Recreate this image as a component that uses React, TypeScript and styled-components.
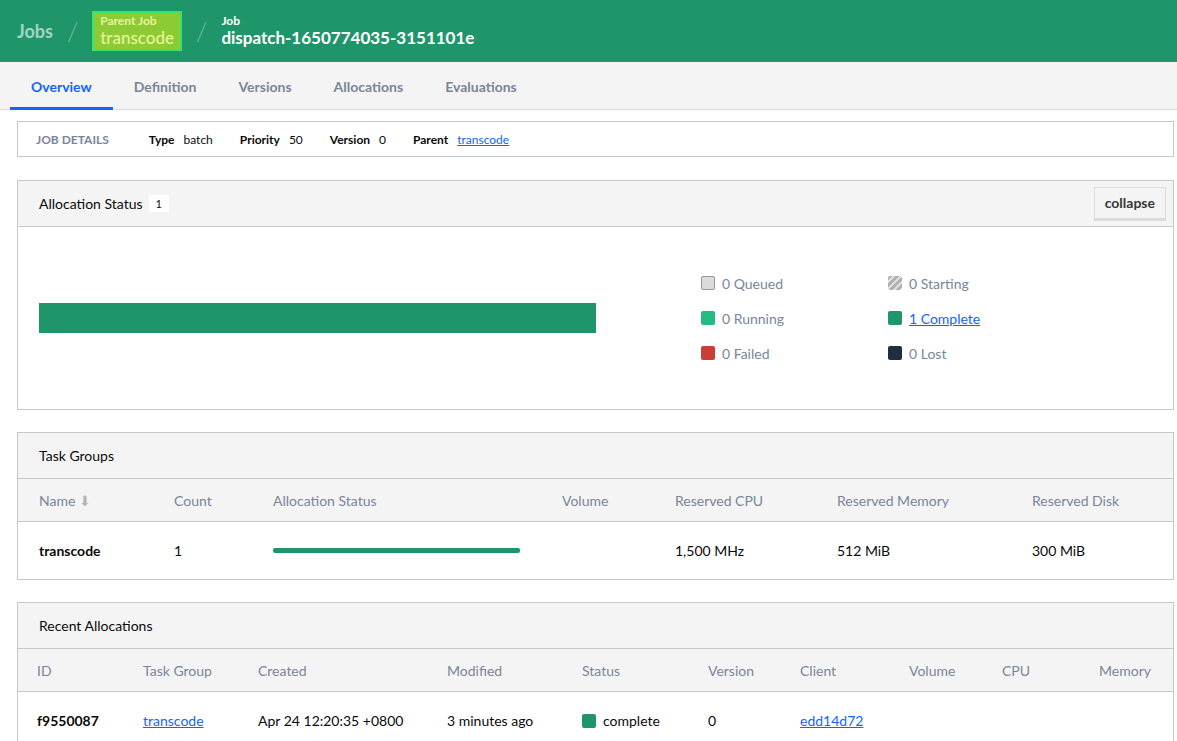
import React from "react";
import styled, { createGlobalStyle } from "styled-components";

const Global = createGlobalStyle`
  body { margin: 0; font-family: Lato, "Open Sans", sans-serif; font-size: 14px; color: #0a0a0a; background: #fff; }
  * { box-sizing: border-box; }
`;

const Header = styled.header`
  height: 62px; background: #1f966a; display: flex; align-items: center; padding: 0 17px; gap: 14px; color: #fff;
`;
const Crumb = styled.div<{ $dim?: boolean }>`
  font-size: 18px; font-weight: 700; color: ${p => (p.$dim ? "rgba(255,255,255,0.6)" : "#fff")};
`;
const Slash = styled.span`font-size: 26px; color: rgba(255,255,255,0.35); font-weight: 300;`;
const Hl = styled.div`
  background: #8dcb34; border: 2px solid #3ce36a; padding: 1px 6px 2px; color: #e8f59a; line-height: 1.1;
`;
const Small = styled.div`font-size: 12px; font-weight: 700;`;
const Big = styled.div`font-size: 17px; font-weight: 700;`;
const Stack = styled.div`display: flex; flex-direction: column; line-height: 1.15;`;

const Tabs = styled.nav`
  height: 48px; background: #f4f4f4; border-bottom: 1px solid #dbdbdb; display: flex; padding-left: 10px;
`;
const Tab = styled.div<{ $active?: boolean }>`
  padding: 0 21px; display: flex; align-items: center; font-weight: 700; font-size: 14px;
  color: ${p => (p.$active ? "#1563ff" : "#7a8599")};
  border-bottom: 3px solid ${p => (p.$active ? "#1563ff" : "transparent")};
  margin-bottom: -1px; padding-top: 3px;
`;

const Main = styled.main`padding: 11px 3px 0 17px; display: flex; flex-direction: column; gap: 22px;`;

const Details = styled.div`
  border: 1px solid #c4c8d0; height: 36px; display: flex; align-items: center; padding-left: 18px; font-size: 12px; gap: 0; margin-bottom: 1px;
`;
const DLabel = styled.span`color: #7a8599; font-weight: 700; margin-right: 40px;`;
const DKey = styled.span`font-weight: 700; margin-right: 9px;`;
const DVal = styled.span`margin-right: 27px;`;
const Link = styled.a`color: #1563ff; text-decoration: underline;`;

const Card = styled.section`border: 1px solid #c4c8d0;`;
const CardHead = styled.div`
  height: 46px; background: #f4f4f4; border-bottom: 1px solid #c4c8d0; display: flex; align-items: center; padding: 0 7px 0 21px; font-size: 14px;
`;
const Badge = styled.span`background: #fff; font-size: 11px; padding: 2px 7px; margin-left: 6px;`;
const Button = styled.button`
  margin-left: auto; font-family: inherit; font-weight: 700; font-size: 14px; background: #f4f4f4; border: 1px solid #dbdbdb;
  border-bottom: 3px solid #dbdbdb; padding: 5px 10px; color: #363636; height: 34px;
`;
const AllocBody = styled.div`height: 182px; display: grid; grid-template-columns: 557px 1fr; align-items: center; padding-left: 21px; gap: 105px;`;
const Bar = styled.div`height: 30px; background: #1f966a;`;
const Legend = styled.div`display: grid; grid-template-columns: 187px 200px; row-gap: 17px;`;
const LItem = styled.div`display: flex; align-items: center; gap: 7px; color: #7a8599; font-size: 14px; height: 18px;`;
const Swatch = styled.span<{ $c: string; $border?: boolean; $striped?: boolean }>`
  width: 14px; height: 14px; border-radius: 2px; background: ${p => p.$striped ? "repeating-linear-gradient(135deg,#b0b0b0 0 3px,#e0e0e0 3px 5px)" : p.$c};
  border: ${p => (p.$border ? "1px solid #999" : "none")};
`;

const Row = styled.div<{ $cols: string; $head?: boolean; $pl: number }>`
  display: grid; grid-template-columns: ${p => p.$cols}; align-items: center; padding-left: ${p => p.$pl}px;
  height: ${p => (p.$head ? 43 : 57)}px; font-size: 14px;
  background: ${p => (p.$head ? "#f4f4f4" : "#fff")};
  color: ${p => (p.$head ? "#7a8599" : "#0a0a0a")};
  border-bottom: 1px solid #c4c8d0;
  &:last-child { border-bottom: none; }
`;
const Bold = styled.span`font-weight: 700;`;
const Thin = styled.div`height: 5px; background: #1f966a; border-radius: 2px; width: 247px;`;
const StatusCell = styled.span`display: flex; align-items: center; gap: 7px;`;

const tgCols = "135px 99px 289px 113px 162px 195px 1fr";
const raCols = "106px 115px 189px 135px 126px 92px 109px 93px 97px 1fr";

export default function App() {
  return (
    <>
      <Global />
      <Header>
        <Crumb $dim>Jobs</Crumb>
        <Slash>/</Slash>
        <Hl><Stack><Small>Parent Job</Small><Big style={{ fontWeight: 500 }}>transcode</Big></Stack></Hl>
        <Slash>/</Slash>
        <Stack><Small>Job</Small><Big>dispatch-1650774035-3151101e</Big></Stack>
      </Header>
      <Tabs>
        <Tab $active>Overview</Tab><Tab>Definition</Tab><Tab>Versions</Tab><Tab>Allocations</Tab><Tab>Evaluations</Tab>
      </Tabs>
      <Main>
        <Details>
          <DLabel>JOB DETAILS</DLabel>
          <DKey>Type</DKey><DVal>batch</DVal>
          <DKey>Priority</DKey><DVal>50</DVal>
          <DKey>Version</DKey><DVal>0</DVal>
          <DKey>Parent</DKey><Link>transcode</Link>
        </Details>
        <Card>
          <CardHead>Allocation Status <Badge>1</Badge><Button>collapse</Button></CardHead>
          <AllocBody>
            <Bar />
            <Legend>
              <LItem><Swatch $c="#dbdbdb" $border />0 Queued</LItem>
              <LItem><Swatch $c="" $striped />0 Starting</LItem>
              <LItem><Swatch $c="#25ba81" />0 Running</LItem>
              <LItem><Swatch $c="#1f966a" /><Link>1 Complete</Link></LItem>
              <LItem><Swatch $c="#c84034" />0 Failed</LItem>
              <LItem><Swatch $c="#1f2f41" />0 Lost</LItem>
            </Legend>
          </AllocBody>
        </Card>
        <Card>
          <CardHead>Task Groups</CardHead>
          <Row $head $cols={tgCols} $pl={21}>
            <span>Name <span style={{ color: "#b5b5b5" }}>⬇</span></span><span>Count</span><span>Allocation Status</span><span>Volume</span><span>Reserved CPU</span><span>Reserved Memory</span><span>Reserved Disk</span>
          </Row>
          <Row $cols={tgCols} $pl={21}>
            <Bold>transcode</Bold><span>1</span><Thin /><span></span><span>1,500 MHz</span><span>512 MiB</span><span>300 MiB</span>
          </Row>
        </Card>
        <Card>
          <CardHead>Recent Allocations</CardHead>
          <Row $head $cols={raCols} $pl={19}>
            <span>ID</span><span>Task Group</span><span>Created</span><span>Modified</span><span>Status</span><span>Version</span><span>Client</span><span>Volume</span><span>CPU</span><span>Memory</span>
          </Row>
          <Row $cols={raCols} $pl={19}>
            <Bold>f9550087</Bold><Link>transcode</Link><span>Apr 24 12:20:35 +0800</span><span>3 minutes ago</span>
            <StatusCell><Swatch $c="#1f966a" />complete</StatusCell><span>0</span><Link>edd14d72</Link><span></span><span></span><span></span>
          </Row>
        </Card>
      </Main>
    </>
  );
}
